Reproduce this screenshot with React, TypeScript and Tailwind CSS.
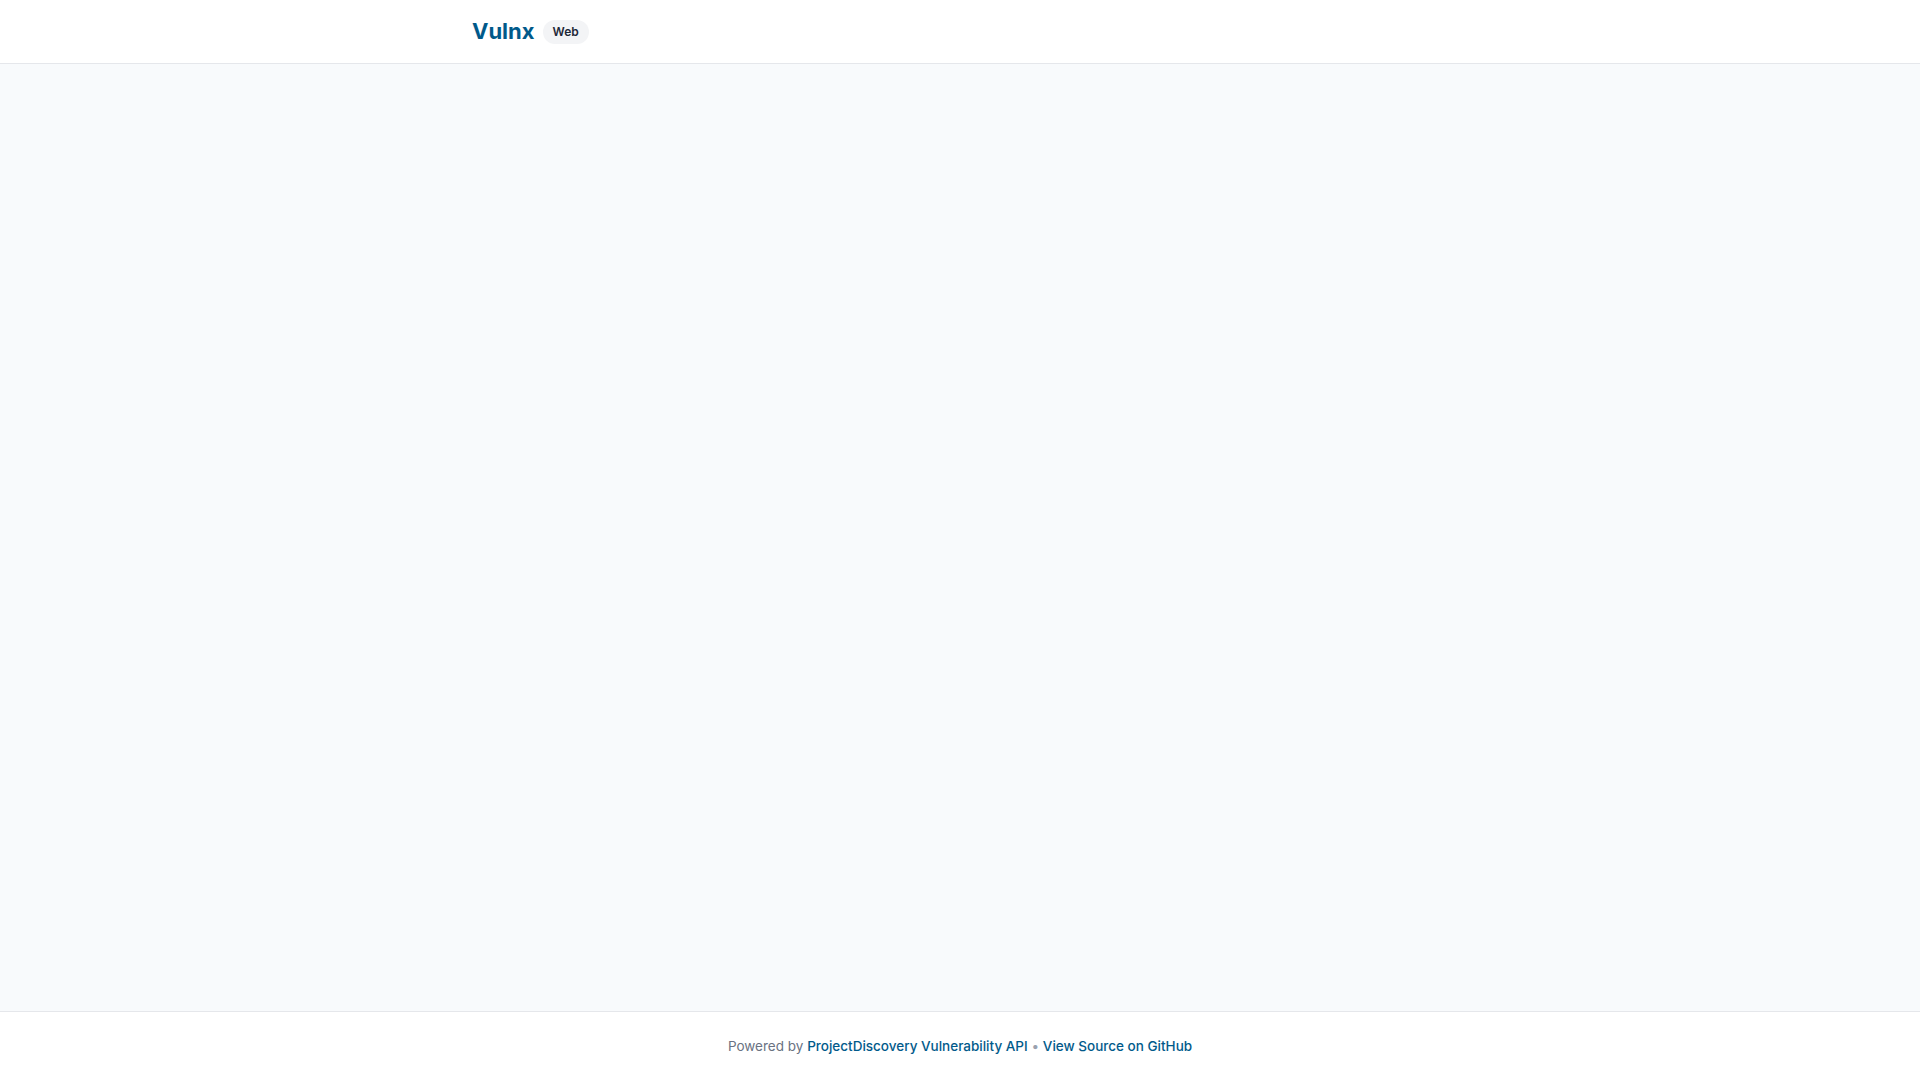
export default function App() {
  return (
    <div
      className="min-h-screen flex flex-col bg-slate-50 text-gray-900"
      style={{ fontFamily: 'Inter, "Liberation Sans", sans-serif' }}
    >
      <header className="h-16 bg-white border-b border-gray-200">
        <div className="max-w-5xl mx-auto h-full px-6 flex items-center gap-2">
          <a href="#" className="text-[22px] font-bold text-sky-800">
            Vulnx
          </a>
          <span className="rounded-full bg-gray-100 px-2.5 py-1 text-xs font-semibold leading-4 text-gray-800">
            Web
          </span>
        </div>
      </header>

      <main className="flex-1" />

      <footer className="bg-white border-t border-gray-200 py-6 text-center text-[13.5px] leading-5 text-gray-500">
        Powered by{' '}
        <a href="#" className="font-medium text-sky-800">
          ProjectDiscovery Vulnerability API
        </a>{' '}
        <span className="text-gray-400">•</span>{' '}
        <a href="#" className="font-medium text-sky-800">
          View Source on GitHub
        </a>
      </footer>
    </div>
  )
}
